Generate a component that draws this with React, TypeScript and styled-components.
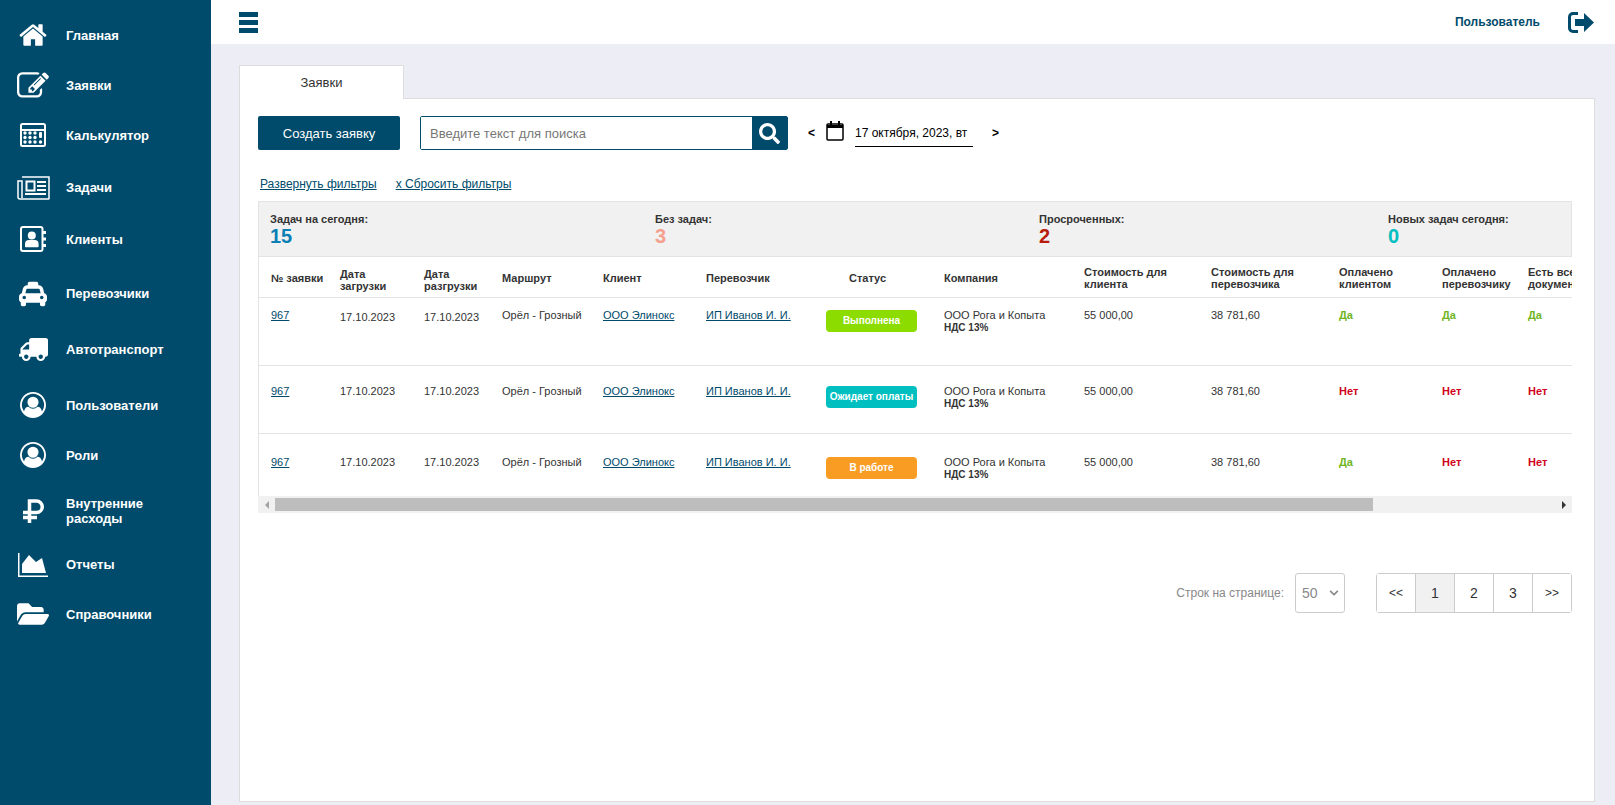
import { ReactNode } from "react";
import styled, { createGlobalStyle } from "styled-components";
import { FaChevronDown, FaFolderOpen, FaSearch, FaTaxi, FaTruck } from "react-icons/fa";

const GlobalStyle = createGlobalStyle`
  * { box-sizing: border-box; }
  html, body { margin: 0; padding: 0; height: 100%; overflow: hidden; }
  body { font-family: "Liberation Sans", Arial, sans-serif; background: #ecedf5; color: #333; }
`;

const Page = styled.div`
  display: flex;
  height: 805px;
`;

const Sidebar = styled.nav`
  flex: 0 0 211px;
  padding-top: 10px;
  background: #004b6b;
`;

const NavItem = styled.a<{ $h: number }>`
  display: flex;
  align-items: center;
  height: ${(p) => p.$h}px;
  color: #fff;
  font-size: 13px;
  font-weight: 700;
  line-height: 15px;
  cursor: pointer;
`;

const NavIcon = styled.span`
  flex: 0 0 66px;
  display: flex;
  justify-content: center;
  align-items: center;
`;

const Main = styled.div`
  flex: 1;
  display: flex;
  flex-direction: column;
  min-width: 0;
`;

const TopBar = styled.header`
  flex: 0 0 44px;
  display: flex;
  align-items: center;
  padding: 0 21px 0 28px;
  background: #fff;
  color: #004b6b;
`;

const UserName = styled.span`
  margin-left: auto;
  margin-right: 28px;
  font-size: 12px;
  font-weight: 700;
`;

const Content = styled.main`
  flex: 1;
  display: flex;
  flex-direction: column;
  min-height: 0;
  padding: 21px 20px 3px 28px;
`;

const Tab = styled.div`
  width: 165px;
  height: 34px;
  margin-bottom: -1px;
  position: relative;
  z-index: 1;
  display: flex;
  align-items: center;
  justify-content: center;
  background: #fff;
  border: 1px solid #ddd;
  border-bottom: none;
  color: #333;
  font-size: 13px;
`;

const Card = styled.section`
  flex: 1;
  min-height: 0;
  padding: 17px 22px 0 18px;
  background: #fff;
  border: 1px solid #ddd;
`;

const Toolbar = styled.div`
  display: flex;
  align-items: center;
  height: 34px;
`;

const CreateButton = styled.button`
  width: 142px;
  height: 34px;
  padding: 0;
  border: none;
  border-radius: 2px;
  background: #004b6b;
  color: #fff;
  font: 13px "Liberation Sans", Arial, sans-serif;
  cursor: pointer;
`;

const SearchBox = styled.div`
  display: flex;
  width: 368px;
  height: 34px;
  margin-left: 20px;
  border: 1px solid #004b6b;
  border-radius: 2px;
`;

const SearchInput = styled.input`
  flex: 1;
  min-width: 0;
  padding: 0 9px;
  border: none;
  outline: none;
  font: 13px "Liberation Sans", Arial, sans-serif;
  color: #333;

  &::placeholder {
    color: #777;
    opacity: 1;
  }
`;

const SearchButton = styled.button`
  flex: 0 0 35px;
  display: flex;
  align-items: center;
  justify-content: center;
  padding: 0;
  border: none;
  background: #004b6b;
  color: #fff;
`;

const DatePicker = styled.div`
  display: flex;
  align-items: center;
  margin-left: 20px;
  color: #000;
`;

const DateArrow = styled.span`
  font-size: 12px;
  font-weight: 700;
`;

const CalendarIcon = styled.svg`
  display: block;
  width: 18px;
  height: 21px;
  margin: -6px 11px 0 11px;
`;

const DateValue = styled.span`
  width: 118px;
  height: 27px;
  padding-top: 6px;
  margin-right: 19px;
  font-size: 12px;
  border-bottom: 1px solid #000;
`;

const Filters = styled.div`
  display: flex;
  gap: 19px;
  margin-top: 27px;
  padding-left: 2px;
  font-size: 12px;
  line-height: 14px;
`;

const FilterLink = styled.a`
  color: #004b6b;
  text-decoration: underline;
  cursor: pointer;
`;

const Stats = styled.div`
  display: grid;
  grid-template-columns: 385px 384px 349px 1fr;
  height: 56px;
  margin-top: 10px;
  padding: 11px 0 0 11px;
  background: #f1f1f1;
  border: 1px solid #e3e3e3;
`;

const StatLabel = styled.div`
  font-size: 11px;
  font-weight: 700;
  line-height: 13px;
  color: #333;
`;

const StatValue = styled.div<{ $color: string }>`
  font-size: 20px;
  font-weight: 700;
  line-height: 21px;
  color: ${(p) => p.$color};
`;

const TableScroll = styled.div`
  overflow: hidden;
  border-left: 1px solid #e3e3e3;
`;

const Table = styled.table`
  width: 1531px;
  table-layout: fixed;
  border-collapse: collapse;
`;

const HeadCell = styled.th<{ $shift?: boolean }>`
  height: 40px;
  padding: ${(p) => (p.$shift ? "7px" : "3px")} 0 0 0;
  border-bottom: 1px solid #e4e4e4;
  font-size: 11px;
  font-weight: 700;
  line-height: 12px;
  text-align: left;
  color: #333;

  &:first-child {
    padding-left: 12px;
  }
`;

const StatusHead = styled(HeadCell)`
  padding-left: 23px;
`;

const Row = styled.tr<{ $h: number }>`
  height: ${(p) => p.$h}px;
  border-bottom: 1px solid #e4e4e4;

  &:last-child {
    border-bottom: none;
  }
`;

const Cell = styled.td<{ $pad: number }>`
  padding: ${(p) => p.$pad}px 0 0 0;
  vertical-align: top;
  font-size: 11px;
  line-height: 13px;
  color: #333;

  &:first-child {
    padding-left: 12px;
  }
`;

const CellLink = styled.a`
  color: #004b6b;
  text-decoration: underline;
  cursor: pointer;
`;

const Vat = styled.div`
  font-size: 10px;
  font-weight: 700;
  line-height: 11px;
`;

const Badge = styled.span<{ $bg: string }>`
  display: flex;
  align-items: center;
  justify-content: center;
  width: 91px;
  height: 22px;
  margin-top: 1px;
  border-radius: 4px;
  background: ${(p) => p.$bg};
  color: #fff;
  font-size: 10px;
  font-weight: 700;
`;

const Paid = styled.span<{ $yes: boolean }>`
  font-weight: 700;
  color: ${(p) => (p.$yes ? "#6fb51e" : "#d0021b")};
`;

const ScrollBar = styled.div`
  display: flex;
  align-items: center;
  height: 17px;
  background: #f1f1f1;
`;

const ScrollArrow = styled.span<{ $dir: "left" | "right" }>`
  flex: 0 0 17px;
  display: flex;
  justify-content: center;

  &::before {
    content: "";
    border-top: 4px solid transparent;
    border-bottom: 4px solid transparent;
    ${(p) => (p.$dir === "left" ? "border-right: 4px solid #a3a3a3;" : "border-left: 4px solid #333;")}
  }
`;

const ScrollTrack = styled.div`
  flex: 1;
`;

const ScrollThumb = styled.div`
  width: 1098px;
  height: 13px;
  background: #bdbdbd;
`;

const Footer = styled.div`
  display: flex;
  align-items: center;
  justify-content: flex-end;
  margin-top: 60px;
`;

const RowsLabel = styled.span`
  margin-right: 11px;
  font-size: 12px;
  color: #888;
`;

const SelectWrap = styled.div`
  position: relative;
  width: 50px;
  height: 40px;
  margin-right: 31px;
  color: #888;

  svg {
    position: absolute;
    top: 15px;
    right: 6px;
    pointer-events: none;
  }
`;

const PageSize = styled.select`
  appearance: none;
  width: 100%;
  height: 100%;
  padding: 0 0 0 6px;
  background: #fff;
  border: 1px solid #ccc;
  border-radius: 3px;
  font: 14px "Liberation Sans", Arial, sans-serif;
  color: #888;
`;

const Pager = styled.div`
  display: flex;
  width: 196px;
  height: 40px;
  border: 1px solid #ccc;
  border-radius: 3px;
`;

const PageButton = styled.button<{ $active?: boolean; $small?: boolean }>`
  flex: 1;
  padding: 0;
  border: none;
  border-left: 1px solid #ccc;
  background: ${(p) => (p.$active ? "#f1f1f1" : "#fff")};
  font: ${(p) => (p.$small ? 12 : 14)}px "Liberation Sans", Arial, sans-serif;
  color: #333;
  cursor: pointer;

  &:first-child {
    border-left: none;
  }
`;

const Bars = () => (
  <svg width="19" height="21" viewBox="0 0 19 21" fill="currentColor">
    <rect width="19" height="5" />
    <rect y="8" width="19" height="5" />
    <rect y="16" width="19" height="5" />
  </svg>
);

const SignOut = () => (
  <svg width="26" height="21" viewBox="0 0 26 21">
    <path d="M10 1.500H5A3.500 3.500 0 0 0 1.500 5v11A3.500 3.500 0 0 0 5 19.500h5" fill="none" stroke="currentColor" strokeWidth="3" />
    <path d="M7 7h9V1l10 9.500L16 20v-6H7z" fill="currentColor" />
  </svg>
);

const Home = () => (
  <svg width="30" height="30" viewBox="0 0 1792 1792" fill="#fff">
    <path d="M1472 992v480q0 26-19 45t-45 19h-384v-384h-256v384h-384q-26 0-45-19t-19-45v-480q0-1 .5-3t.5-3l575-474 575 474q1 2 1 6zm223-69l-62 74q-8 9-21 11h-3q-13 0-21-7l-692-577-692 577q-12 8-24 7-13-2-21-11l-62-74q-8-10-7-23.500t11-21.500l719-599q32-26 76-26t76 26l244 204v-195q0-14 9-23t23-9h192q14 0 23 9t9 23v408l219 182q10 8 11 21.500t-7 23.500z" />
  </svg>
);

const Edit = () => (
  <svg width="32" height="32" viewBox="0 0 1792 1792" fill="#fff">
    <path d="M888 1184l116-116-152-152-116 116v56h96v96h56zm440-720q-16-16-33 1l-350 350q-17 17-1 33t33-1l350-350q17-17 1-33zm80 594v190q0 119-84.500 203.500t-203.500 84.500h-832q-119 0-203.500-84.500t-84.500-203.500v-832q0-119 84.500-203.500t203.500-84.500h832q63 0 117 25 15 7 18 23 3 17-9 29l-49 49q-14 14-32 8-23-6-45-6h-832q-66 0-113 47t-47 113v832q0 66 47 113t113 47h832q66 0 113-47t47-113v-126q0-13 9-22l64-64q15-15 35-7t20 29zm-96-738l288 288-672 672h-288v-288zm444 132l-92 92-288-288 92-92q28-28 68-28t68 28l152 152q28 28 28 68t-28 68z" />
  </svg>
);

const Calculator = () => (
  <svg width="26" height="24" viewBox="0 0 26 24" fill="#fff">
    <rect x="1" y="1" width="24" height="22" rx="1.500" fill="none" stroke="#fff" strokeWidth="2" />
    <rect x="1" y="6" width="24" height="2" />
    {[10, 14.500, 19].flatMap((y) =>
      [4, 9, 14].map((x) => <circle key={`${x}-${y}`} cx={x + 1} cy={y} r="1.700" />)
    )}
    <rect x="19" y="9" width="3" height="6" rx="1" />
    <circle cx="20.500" cy="19" r="1.700" />
  </svg>
);

const Newspaper = () => (
  <svg width="33" height="24" viewBox="0 0 33 24" fill="none" stroke="#fff" strokeWidth="1.500">
    <path d="M5 1h27v21.500a.5.5 0 0 1-.5.5H3a2 2 0 0 1-2-2V5h4v17" />
    <rect x="9.500" y="5.500" width="8" height="9" strokeWidth="2" />
    <path d="M20 6h9M20 10h9M20 14h9M8 18h21" strokeWidth="2" />
  </svg>
);

const AddressBook = () => (
  <svg width="26" height="26" viewBox="0 0 26 26">
    <rect x="1" y="1" width="21.500" height="24" rx="2" fill="none" stroke="#fff" strokeWidth="2" />
    <path d="M23 5h3v3h-3zM23 11.500h3v3h-3zM23 18h3v3h-3z" fill="#fff" />
    <circle cx="11.800" cy="9.500" r="4" fill="#fff" />
    <path d="M5 20.500v-2.500q0-4 4-4h5.600q4 0 4 4v2.500a.8.8 0 0 1-.8.8H5.800a.8.8 0 0 1-.8-.8z" fill="#fff" />
  </svg>
);

const UserCircle = () => (
  <svg width="26" height="26" viewBox="0 0 1792 1792" fill="#fff">
    <path d="M896 0q182 0 348 71t286 191 191 286 71 348q0 181-70.500 347t-190.500 286-286 191.500-349 71.500-349-71-285.500-191.500-190.500-286-71-347.500 71-348 191-286 286-191 348-71zm619 1351q149-205 149-455 0-156-61-298t-164-245-245-164-298-61-298 61-245 164-164 245-61 298q0 250 149 455 66-327 306-327 131 128 313 128t313-128q240 0 306 327zm-235-647q0-159-112.500-271.500t-271.500-112.500-271.500 112.500-112.500 271.500 112.500 271.500 271.500 112.500 271.500-112.500 112.500-271.500z" />
  </svg>
);

const Ruble = () => (
  <svg width="22" height="24" viewBox="0 0 22 24" fill="none" stroke="#fff" strokeWidth="3.500">
    <path d="M7.500 24V2h7a5.500 5.500 0 0 1 0 11.500H1M1 18.500h14" />
  </svg>
);

const AreaChart = () => (
  <svg width="30" height="24" viewBox="0 0 30 24" fill="#fff">
    <path d="M0 0h1.500v22.500H30V24H0z" />
    <path d="M4 11 11 2l7 7 6-4 4 15H4z" />
  </svg>
);

const navItems: { label: ReactNode; icon: ReactNode; h: number }[] = [
  { label: "Главная", icon: <Home />, h: 50 },
  { label: "Заявки", icon: <Edit />, h: 51 },
  { label: "Калькулятор", icon: <Calculator />, h: 48 },
  { label: "Задачи", icon: <Newspaper />, h: 57 },
  { label: "Клиенты", icon: <AddressBook />, h: 46 },
  { label: "Перевозчики", icon: <FaTaxi size={28} />, h: 63 },
  { label: "Автотранспорт", icon: <FaTruck size={29} style={{ transform: "scaleX(-1)" }} />, h: 48 },
  { label: "Пользователи", icon: <UserCircle />, h: 64 },
  { label: "Роли", icon: <UserCircle />, h: 36 },
  { label: <>Внутренние<br />расходы</>, icon: <Ruble />, h: 76 },
  { label: "Отчеты", icon: <AreaChart />, h: 31 },
  { label: "Справочники", icon: <FaFolderOpen size={32} />, h: 68 },
];

const rows = [
  { h: 68, pad: 11, datePad: 13, status: "Выполнена", color: "#8cdc00", paid: [true, true, true] },
  { h: 68, pad: 19, datePad: 19, status: "Ожидает оплаты", color: "#00bfc0", paid: [false, false, false] },
  { h: 63, pad: 22, datePad: 22, status: "В работе", color: "#f89c24", paid: [true, false, false] },
];

const colWidths = [81, 84, 78, 101, 103, 120, 118, 140, 127, 128, 103, 86, 262];

const App = () => {
  return (
    <Page>
      <GlobalStyle />
      <Sidebar>
        {navItems.map((item, i) => (
          <NavItem key={i} $h={item.h}>
            <NavIcon>{item.icon}</NavIcon>
            <span>{item.label}</span>
          </NavItem>
        ))}
      </Sidebar>
      <Main>
        <TopBar>
          <Bars />
          <UserName>Пользователь</UserName>
          <SignOut />
        </TopBar>
        <Content>
          <Tab>Заявки</Tab>
          <Card>
            <Toolbar>
              <CreateButton>Создать заявку</CreateButton>
              <SearchBox>
                <SearchInput placeholder="Введите текст для поиска" />
                <SearchButton>
                  <FaSearch size={21} />
                </SearchButton>
              </SearchBox>
              <DatePicker>
                <DateArrow>&lt;</DateArrow>
                <CalendarIcon viewBox="0 0 18 21" fill="none" stroke="#000">
                  <rect x="1" y="4" width="16" height="16" rx="1" strokeWidth="1.500" />
                  <path d="M1 6.500h16" strokeWidth="3" />
                  <path d="M5 1v5M13 1v5" strokeWidth="2" />
                </CalendarIcon>
                <DateValue>17 октября, 2023, вт</DateValue>
                <DateArrow>&gt;</DateArrow>
              </DatePicker>
            </Toolbar>
            <Filters>
              <FilterLink>Развернуть фильтры</FilterLink>
              <FilterLink>x Сбросить фильтры</FilterLink>
            </Filters>
            <Stats>
              <div>
                <StatLabel>Задач на сегодня:</StatLabel>
                <StatValue $color="#0c7fb5">15</StatValue>
              </div>
              <div>
                <StatLabel>Без задач:</StatLabel>
                <StatValue $color="#f5a08e">3</StatValue>
              </div>
              <div>
                <StatLabel>Просроченных:</StatLabel>
                <StatValue $color="#b81c0a">2</StatValue>
              </div>
              <div>
                <StatLabel>Новых задач сегодня:</StatLabel>
                <StatValue $color="#00bfc0">0</StatValue>
              </div>
            </Stats>
            <TableScroll>
              <Table>
                <colgroup>
                  {colWidths.map((w, i) => (
                    <col key={i} width={w} />
                  ))}
                </colgroup>
                <thead>
                  <tr>
                    <HeadCell>№ заявки</HeadCell>
                    <HeadCell $shift>Дата<br />загрузки</HeadCell>
                    <HeadCell $shift>Дата<br />разгрузки</HeadCell>
                    <HeadCell>Маршрут</HeadCell>
                    <HeadCell>Клиент</HeadCell>
                    <HeadCell>Перевозчик</HeadCell>
                    <StatusHead>Статус</StatusHead>
                    <HeadCell>Компания</HeadCell>
                    <HeadCell>Стоимость для<br />клиента</HeadCell>
                    <HeadCell>Стоимость для<br />перевозчика</HeadCell>
                    <HeadCell>Оплачено<br />клиентом</HeadCell>
                    <HeadCell>Оплачено<br />перевозчику</HeadCell>
                    <HeadCell>Есть все<br />документы</HeadCell>
                  </tr>
                </thead>
                <tbody>
                  {rows.map((r, i) => (
                    <Row key={i} $h={r.h}>
                      <Cell $pad={r.pad}><CellLink>967</CellLink></Cell>
                      <Cell $pad={r.datePad}>17.10.2023</Cell>
                      <Cell $pad={r.datePad}>17.10.2023</Cell>
                      <Cell $pad={r.pad}>Орёл - Грозный</Cell>
                      <Cell $pad={r.pad}><CellLink>ООО Элинокс</CellLink></Cell>
                      <Cell $pad={r.pad}><CellLink>ИП Иванов И. И.</CellLink></Cell>
                      <Cell $pad={r.pad}><Badge $bg={r.color}>{r.status}</Badge></Cell>
                      <Cell $pad={r.pad}>
                        ООО Рога и Копыта
                        <Vat>НДС 13%</Vat>
                      </Cell>
                      <Cell $pad={r.pad}>55 000,00</Cell>
                      <Cell $pad={r.pad}>38 781,60</Cell>
                      {r.paid.map((yes, j) => (
                        <Cell key={j} $pad={r.pad}>
                          <Paid $yes={yes}>{yes ? "Да" : "Нет"}</Paid>
                        </Cell>
                      ))}
                    </Row>
                  ))}
                </tbody>
              </Table>
            </TableScroll>
            <ScrollBar>
              <ScrollArrow $dir="left" />
              <ScrollTrack>
                <ScrollThumb />
              </ScrollTrack>
              <ScrollArrow $dir="right" />
            </ScrollBar>
            <Footer>
              <RowsLabel>Строк на странице:</RowsLabel>
              <SelectWrap>
                <PageSize defaultValue="50">
                  <option>25</option>
                  <option>50</option>
                  <option>100</option>
                </PageSize>
                <FaChevronDown size={10} />
              </SelectWrap>
              <Pager>
                <PageButton $small>&lt;&lt;</PageButton>
                <PageButton $active>1</PageButton>
                <PageButton>2</PageButton>
                <PageButton>3</PageButton>
                <PageButton $small>&gt;&gt;</PageButton>
              </Pager>
            </Footer>
          </Card>
        </Content>
      </Main>
    </Page>
  );
};

export default App;
